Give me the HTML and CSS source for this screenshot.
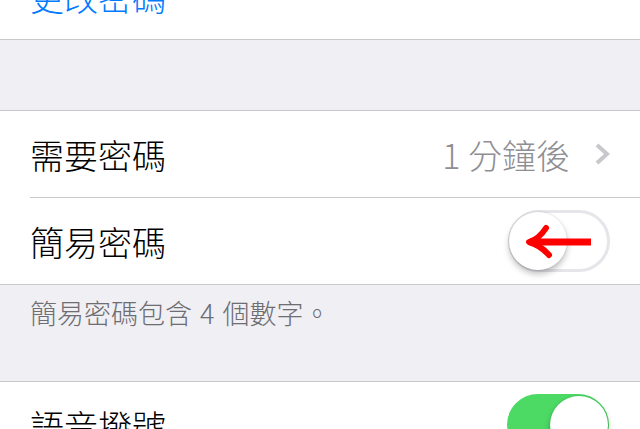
FILE: index.html
```html
<!DOCTYPE html>
<html lang="zh-Hant">
<head>
  <meta charset="UTF-8">
  <meta name="viewport" content="width=device-width, initial-scale=1.0">
  <title>密碼設定</title>
  <link rel="stylesheet" href="styles.css">
</head>
<body>

  <div class="group first">
    <div class="cell">
      <span class="link">更改密碼</span>
    </div>
  </div>

  <div class="group">
    <div class="cell">
      <span class="label">需要密碼</span>
      <span class="value">1 分鐘後</span>
      <svg class="chevron" width="16" height="22" viewBox="0 0 16 22">
        <polyline points="2,2 12,11 2,20" fill="none" stroke="#c7c7cc" stroke-width="4"/>
      </svg>
    </div>
    <div class="cell">
      <span class="label">簡易密碼</span>
      <div class="switch">
        <div class="knob"></div>
        <svg class="arrow" width="102" height="62" viewBox="0 0 102 62">
          <path d="M22 32 H83" stroke="#ff0000" stroke-width="7" fill="none"/>
          <path d="M38 18 Q31 29 21 32 Q32 35 41 45" stroke="#ff0000" stroke-width="6" fill="none" stroke-linecap="round" stroke-linejoin="round"/>
        </svg>
      </div>
    </div>
  </div>

  <p class="footer">簡易密碼包含 4 個數字。</p>

  <div class="group last">
    <div class="cell">
      <span class="label">語音撥號</span>
      <div class="switch on">
        <div class="knob"></div>
      </div>
    </div>
  </div>

</body>
</html>
```

FILE: styles.css
```css
body {
  margin: 0;
  background-color: #efeff4;
  font-family: "Noto Sans CJK TC", "Noto Sans", sans-serif;
  font-weight: 300;
  overflow: hidden;
}
.group {
  background: #fff;
  border-top: 1px solid #c8c7cc;
  border-bottom: 1px solid #c8c7cc;
  margin-top: 70px;
}
.group.first {
  margin-top: -48px;
}
.group.last {
  margin-top: 0;
}
.cell {
  display: flex;
  align-items: center;
  height: 86px;
  margin-left: 30px;
  padding-right: 30px;
  font-size: 34px;
}
.cell + .cell {
  border-top: 1px solid #c8c7cc;
}
.link {
  color: #007aff;
}
.label {
  color: #000;
  flex: 1;
}
.value {
  color: #8e8e93;
}
.chevron {
  margin-left: 25px;
  margin-right: -1px;
}
.footer {
  margin: 0;
  height: 96px;
  box-sizing: border-box;
  padding: 12px 30px 0;
  font-size: 27px;
  line-height: 32px;
  word-spacing: 2px;
  color: #6d6d72;
}
.switch {
  position: relative;
  width: 102px;
  height: 62px;
  box-sizing: border-box;
  border: 3px solid #e5e5ea;
  border-radius: 31px;
  background: #fff;
}
.switch .knob {
  position: absolute;
  top: -1px;
  left: -2px;
  width: 58px;
  height: 58px;
  border-radius: 50%;
  background: #fff;
  box-shadow: 0 4px 6px rgba(0,0,0,0.25), 0 0 0 1px rgba(0,0,0,0.05);
}
.switch.on {
  background: #4cd964;
  border-color: #4cd964;
  margin-right: 1px;
}
.switch.on .knob {
  left: auto;
  right: -2px;
}
.arrow {
  position: absolute;
  top: -3px;
  left: -3px;
}
```
